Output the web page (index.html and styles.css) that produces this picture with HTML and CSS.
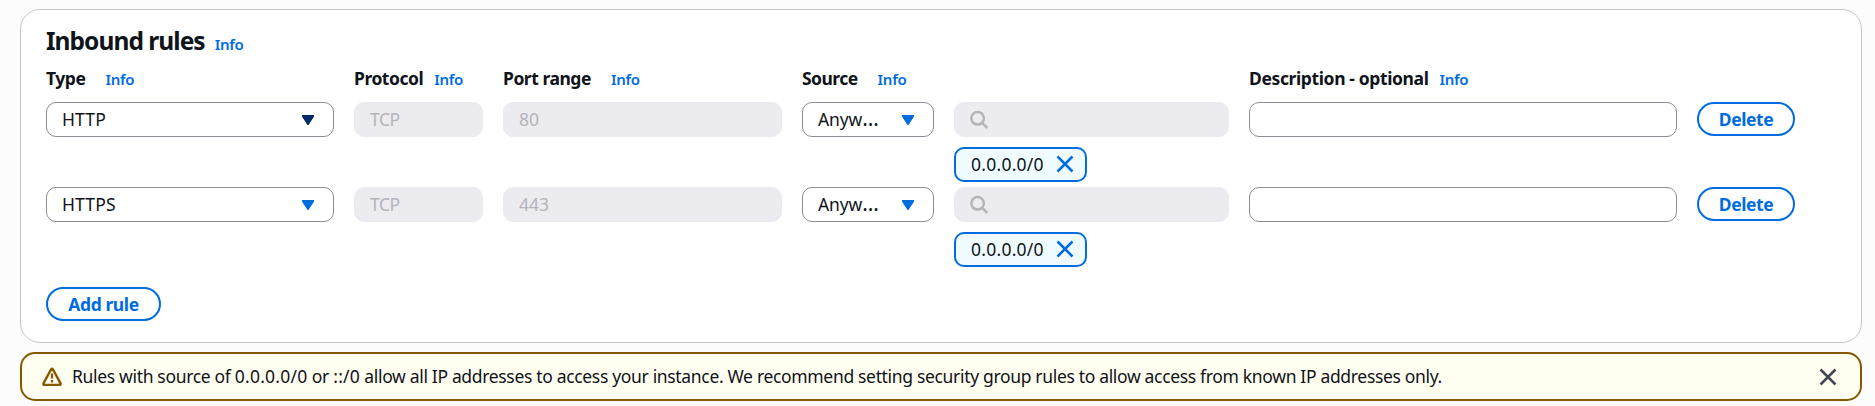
FILE: index.html
```html
<!DOCTYPE html>
<html lang="en">
<head>
<meta charset="utf-8">
<title>Inbound rules</title>
<link rel="stylesheet" href="styles.css">
</head>
<body>
<svg class="defs" width="0" height="0">
  <symbol id="caret" viewBox="0 0 14 12"><path d="M1.8 2h10.4L7 9.9z" fill="currentColor" stroke="currentColor" stroke-width="2" stroke-linejoin="round"/></symbol>
  <symbol id="search" viewBox="0 0 20 20"><circle cx="7.6" cy="8.3" r="6.3" fill="none" stroke="currentColor" stroke-width="2.5"/><path d="M12 12.7l5.3 5.3" fill="none" stroke="currentColor" stroke-width="2.5"/></symbol>
  <symbol id="close" viewBox="0 0 20 20"><path d="M2.5 2.5l15 15M17.5 2.5l-15 15" fill="none" stroke="currentColor" stroke-width="2.5"/></symbol>
</svg>
<section class="panel">
  <header class="title"><h2>Inbound rules</h2><a class="info">Info</a></header>
  <div class="grid labels">
    <div class="label"><b>Type</b><a class="info wide">Info</a></div>
    <div class="label"><b>Protocol</b><a class="info">Info</a></div>
    <div class="label"><b>Port range</b><a class="info wide">Info</a></div>
    <div class="label span2"><b class="tight">Source</b><a class="info wide">Info</a></div>
    <div class="label"><b class="loose">Description - optional</b><a class="info">Info</a></div>
  </div>
  <div class="grid row first">
    <div class="field select"><span class="type">HTTP</span><svg class="caret active"><use href="#caret"/></svg></div>
    <div class="field disabled"><span>TCP</span></div>
    <div class="field disabled"><span class="number">80</span></div>
    <div class="field select"><span class="anywhere">Anyw<span class="dots">…</span></span><svg class="caret"><use href="#caret"/></svg></div>
    <div class="source">
      <div class="field disabled"><svg class="search"><use href="#search"/></svg></div>
      <div class="token"><span class="ip">0.0.0.0/0</span><svg class="close"><use href="#close"/></svg></div>
    </div>
    <div class="field"></div>
    <button class="button">Delete</button>
  </div>
  <div class="grid row second">
    <div class="field select"><span class="type">HTTPS</span><svg class="caret"><use href="#caret"/></svg></div>
    <div class="field disabled"><span>TCP</span></div>
    <div class="field disabled"><span class="number">443</span></div>
    <div class="field select"><span class="anywhere">Anyw<span class="dots">…</span></span><svg class="caret"><use href="#caret"/></svg></div>
    <div class="source">
      <div class="field disabled"><svg class="search"><use href="#search"/></svg></div>
      <div class="token"><span class="ip">0.0.0.0/0</span><svg class="close"><use href="#close"/></svg></div>
    </div>
    <div class="field"></div>
    <button class="button">Delete</button>
  </div>
  <button class="button add">Add rule</button>
</section>
<aside class="alert">
  <svg class="warn" viewBox="0 0 20 20"><path d="M9.1 2.3Q10 .9 10.9 2.3L18.5 16.4Q19 17.9 17.5 17.9H2.5Q1 17.9 1.5 16.4z" fill="none" stroke="currentColor" stroke-width="2.4" stroke-linejoin="round"/><path d="M10 6.5v5M10 13v2.4" fill="none" stroke="currentColor" stroke-width="2.3"/></svg>
  <p>Rules with source of <span class="ip">0.0.0.0/0</span> or <span class="ip">::/0</span> allow all IP addresses to access your instance. We recommend setting security group rules to allow access from known IP addresses only.</p>
  <svg class="close dismiss"><use href="#close"/></svg>
</aside>
</body>
</html>
```
FILE: styles.css
```css
* { box-sizing: border-box; }
body {
  margin: 0;
  padding: 9px 13px 0 20px;
  height: 406px;
  overflow: hidden;
  background: #fcfcfd;
  color: #0f141a;
  font: 17.5px/25px "Noto Sans", "Open Sans", sans-serif;
  letter-spacing: -0.5px;
  white-space: nowrap;
}
.defs { display: block; height: 0; }
.panel {
  height: 334px;
  padding: 16px 25px 0;
  background: #fff;
  border: 1px solid #c6c6cd;
  border-radius: 20px;
}
.title { display: flex; align-items: baseline; gap: 10px; height: 38px; }
.title h2 { margin: 0; font-size: 24.5px; line-height: 30px; font-weight: 700; letter-spacing: -0.95px; }
.info { color: #006ce0; font-size: 15px; font-weight: 600; letter-spacing: -0.3px; }
.grid {
  display: grid;
  grid-template-columns: 288px 129px 279px 132px 275px 428px 98px;
  column-gap: 20px;
}
.labels { height: 38px; padding-top: 2px; }
.label { display: flex; align-items: baseline; gap: 11px; }
.label b { letter-spacing: -0.47px; }
.label .tight { letter-spacing: -0.55px; }
.label .loose { letter-spacing: -0.38px; }
.wide { margin-left: 9px; }
.span2 { grid-column: span 2; }
.row { height: 85px; align-items: start; }
.field {
  display: flex;
  align-items: center;
  height: 35px;
  padding: 0 15px;
  background: #fff;
  border: 1px solid #8c8c94;
  border-radius: 10px;
}
.select { justify-content: space-between; padding-right: 18px; }
.type { letter-spacing: 0.15px; }
.number { letter-spacing: 0; }
.anywhere { letter-spacing: -0.1px; }
.dots { font-size: 21px; line-height: 20px; letter-spacing: 0; }
.disabled { background: #ebebf0; border-color: #ebebf0; color: #b4b4bb; }
.caret { width: 14px; height: 12px; color: #006ce0; }
.caret.active { color: #002b66; }
.search { width: 20px; height: 20px; }
.token {
  display: flex;
  align-items: center;
  justify-content: space-between;
  width: 133px;
  height: 35px;
  margin-top: 10px;
  padding: 0 10px 1px 15px;
  background: #f0fbff;
  border: 2px solid #006ce0;
  border-radius: 10px;
}
.ip { letter-spacing: 0.25px; }
.close { width: 20px; height: 20px; color: #006ce0; }
.button {
  display: flex;
  align-items: center;
  justify-content: center;
  width: 98px;
  height: 34px;
  padding: 0;
  background: #fff;
  border: 2px solid #006ce0;
  border-radius: 17px;
  color: #006ce0;
  font: inherit;
  font-weight: 700;
  letter-spacing: -0.4px;
}
.add { width: 115px; margin-top: 15px; }
.alert {
  display: flex;
  align-items: center;
  height: 49px;
  margin-top: 9px;
  padding: 0 22px 0 20px;
  background: #fffef0;
  border: 2px solid #855900;
  border-radius: 15px;
}
.alert p { flex: 1; margin: 0 0 0 10px; letter-spacing: -0.33px; }
.warn { width: 20px; height: 20px; color: #855900; }
.dismiss { color: #424650; }
```
